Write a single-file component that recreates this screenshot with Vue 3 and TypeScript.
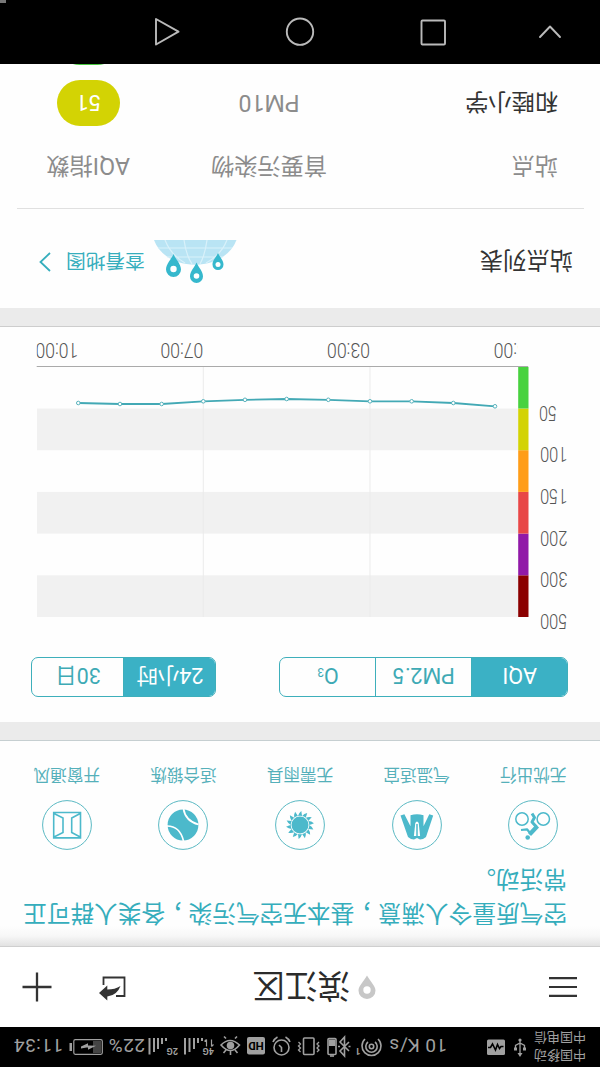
<script setup lang="ts">
interface Tip { label: string; icon: string }
interface Level { value: string; color: string }

const tips: Tip[] = [
  { label: '无忧出行', icon: 'bike' },
  { label: '气温适宜', icon: 'coat' },
  { label: '无需雨具', icon: 'sun' },
  { label: '适合锻炼', icon: 'ball' },
  { label: '开窗通风', icon: 'window' },
]

const pollutants: string[] = ['AQI', 'PM2.5', 'O']
const ranges: string[] = ['24小时', '30日']

const levels: Level[] = [
  { value: '500', color: '#8b0000' },
  { value: '300', color: '#9119a8' },
  { value: '200', color: '#e84747' },
  { value: '150', color: '#ff9d18' },
  { value: '100', color: '#d3d304' },
  { value: '50', color: '#48d23f' },
]
const step = 41.7
const plotTop = 25

const hours = ['23:00', '03:00', '07:00', '10:00']
const hourX = [63.3, 230, 396.7, 521.7]

const values = [235.7, 239, 240.7, 240.7, 242.2, 243, 242.2, 240.7, 238, 238, 239]
const points = values.map((y, i) => ({ x: 105 + i * 41.67, y }))
const line = points.map(p => `${p.x},${p.y}`).join(' ')
const rays = Array.from({ length: 14 }, (_, i) => (i * 360) / 14)
</script>

<template>
  <div class="screen">
    <div class="status">
      <div class="carrier"><span>中国移动</span><span>中国电信</span></div>
      <svg class="usb" width="12" height="20" viewBox="0 0 12 20" fill="none" stroke="currentColor" stroke-width="1.3">
        <path d="M6 3V17M1.5 8v3.5L6 14l4.5-2.5V8" /><circle cx="6" cy="17" r="1.6" fill="currentColor" stroke="none" />
        <path d="M6 0L8.5 4h-5zM0 6.5h3v3H0zM9 6.5h3v3H9z" fill="currentColor" stroke="none" />
      </svg>
      <svg class="pulse" width="18" height="16" viewBox="0 0 18 16"><rect width="18" height="15.5" rx="1.5" fill="currentColor" /><path d="M1.500 8.500H4l1.500-2 2 4 2-5.500 3 6 2-3.500H17" fill="none" stroke="#000" stroke-width="1.6" /></svg>
      <span class="speed">10 K/s</span>
      <svg class="icons" width="236" height="40" viewBox="217 0 236 40" fill="none" stroke="currentColor" stroke-width="1.6">
        <path d="M222 28a9.5 9.5 0 1 1 13 0M225 25a5.7 5.7 0 1 1 7 0" /><circle cx="228.500" cy="20.500" r="2.2" />
        <text x="239.500" y="19" class="tiny">1</text>
        <path d="M251 16l9 9-4.500 5V11l4.500 5-9 9M249.500 20.500h2M260 20.500h2" />
        <rect x="264" y="12.500" width="8" height="16" rx="1" /><path d="M266 11h4" /><rect x="265" y="21" width="6" height="6.500" fill="currentColor" stroke="none" />
        <rect x="286" y="12.500" width="10.500" height="16.500" rx="1" /><path d="M283 15l-2 2 2 2-2 2 2 2-2 2M299.500 15l2 2-2 2 2 2-2 2 2 2" stroke-width="1.3" />
        <circle cx="318.500" cy="19.500" r="7.500" /><path d="M318.500 15v4.500l2.500 2.500M310 25a10 10 0 0 0 4.500 5M327 25a10 10 0 0 1-4.500 5" />
        <rect x="335" y="12.500" width="18" height="17.500" rx="2" fill="currentColor" stroke="none" /><text x="344" y="25.500" class="hd" text-anchor="middle">HD</text>
        <path d="M360.500 22q9-11 18.500 0q-9 9-18.500 0zM369.500 12V16M362.500 14l2.500 3M376.500 14l-2.500 3M365 28.500l-2 2M374 28.500l2 2" /><circle cx="369.500" cy="21.500" r="3" fill="currentColor" />
        <text x="386" y="19" class="tiny">4G</text><path d="M388.500 20.500v7m-2-5l2-2M393.500 27.500v-7m2 5l-2 2" stroke-width="1.2" />
        <path d="M398 29v-3M402 29v-5M406 29V18M410.500 29V15M415 29V12.500" stroke-width="2" />
        <text x="422" y="19" class="tiny">2G</text>
        <path d="M434 29v-3M438 29v-6M442 29V18M446 29V15M450.500 29V12.500" stroke-width="2" />
      </svg>
      <span class="percent">22%</span>
      <svg class="battery" width="34" height="18" viewBox="0 0 34 18"><rect x=".7" y="1.700" width="28.500" height="14.600" rx="1.500" fill="none" stroke="currentColor" stroke-width="1.2" /><rect x="2" y="3" width="8" height="12" fill="#444" /><path d="M31 5h2.500v8H31z" fill="currentColor" /><path d="M7 10.300l8-4v2.200h1.500l5.500-.9v2l-7 3.200v-2.300h-1z" fill="currentColor" /></svg>
      <span class="time">11:34</span>
    </div>

    <header class="header">
      <svg class="menu" width="28" height="22" viewBox="0 0 28 22"><path d="M0 2.200h28M0 11h28M0 19.800h28" stroke="#333" stroke-width="2.200" /></svg>
      <div class="place">
        <svg width="18" height="24" viewBox="0 0 18 24"><path d="M9 23.500C6 18 .5 13 .5 8.500a8.500 8.500 0 0 1 17 0C17.500 13 12 18 9 23.500z" fill="#c7c7c7" /><circle cx="9" cy="9" r="3.700" fill="#fff" /></svg>
        <h1>滨江区</h1>
      </div>
      <div class="actions">
        <svg width="30" height="28" viewBox="0 0 30 28"><g transform="rotate(180 15 14)"><path d="M6.500 12V4.500h21v18.500h-8.500" fill="none" stroke="#333" stroke-width="1.800" /><path d="M2 20L10.300 12.500v4q7.700 0 13.200-3.500Q20 22.500 10.300 23.500V27.500z" fill="#333" /></g></svg>
        <svg width="30" height="30" viewBox="0 0 30 30"><path d="M15 .5v29M.5 15h29" stroke="#333" stroke-width="2.300" /></svg>
      </div>
    </header>

    <section class="advice">
      <p>空气质量令人满意<span class="comma">，</span>基本无空气污染<span class="comma">，</span>各类人群可正<br />常活动。</p>
      <ul class="tips">
        <li v-for="tip in tips" :key="tip.icon">
          <svg width="50" height="50" viewBox="0 0 50 50">
            <circle cx="25" cy="25" r="24.400" fill="none" stroke="#5ab9c3" stroke-width="1" />
            <g transform="rotate(180 25 25)" fill="#4cb9cb">
              <template v-if="tip.icon === 'bike'">
                <g fill="none" stroke="#4cb9cb" stroke-width="1.500"><circle cx="14" cy="19" r="6.200" /><circle cx="35.300" cy="19" r="6.200" /></g>
                <circle cx="19.700" cy="37.500" r="2.300" />
                <g fill="none" stroke="#4cb9cb" stroke-linejoin="round">
                  <path d="M24 13.500l2.500 4-2.500 4.500 4.500 5" stroke-width="3" />
                  <path d="M29.500 26L21.500 34.500" stroke-width="4.200" />
                  <path d="M13 30l6-.7 4 5" stroke-width="2.200" />
                </g>
              </template>
              <template v-else-if="tip.icon === 'coat'">
                <path d="M8.500 15.500l3.900-1.200 6.100 12V15.300q6.500-2 13 0v11l5.800-12 3.900 1.200L34 37q-3 2.500-6 2.500l-3-1.500-3 1.500q-3 0-6-2.500z" />
                <path d="M23.300 23q1.700-3 3.400 0l1.400 13h-6.200z" fill="#fff" /><path d="M25 24v14" stroke="#4cb9cb" stroke-width="1.500" />
              </template>
              <template v-else-if="tip.icon === 'sun'">
                <circle cx="25" cy="25" r="8.500" />
                <path v-for="r in rays" :key="r" d="M23 16q2-.6 4 0q-.3-2.500-.7-5q-2.600 2-3.300 5z" :transform="`rotate(${r} 25 25)`" />
              </template>
              <template v-else-if="tip.icon === 'ball'">
                <circle cx="25" cy="25" r="15.400" />
                <path d="M25.500 9q2 12 15 15.500M9 26q13 0 16.500 15" fill="none" stroke="#fff" stroke-width="1.700" />
              </template>
              <template v-else>
                <path d="M11.700 12.500h26.800v25.400H11.700zM12 13.500l9 4.500v14.500L12 37M38.200 13.500l-8.500 4.500v14.500l8.500 4.500" fill="none" stroke="#4cb9cb" stroke-width="1.600" />
              </template>
            </g>
          </svg>
          <span>{{ tip.label }}</span>
        </li>
      </ul>
    </section>

    <section class="trend">
      <div class="switches">
        <div class="segment wide">
          <span v-for="(p, i) in pollutants" :key="p" :class="{ active: i === 0 }">{{ p }}<small v-if="p === 'O'">3</small></span>
        </div>
        <div class="segment">
          <span v-for="(r, i) in ranges" :key="r" :class="{ active: i === 0 }">{{ r }}</span>
        </div>
      </div>
      <svg class="chart" width="600" height="315" viewBox="0 0 600 315">
        <defs><clipPath id="plot"><rect x="82" y="0" width="481.300" height="315" /></clipPath></defs>
        <g v-for="(l, i) in levels" :key="l.value">
          <rect v-if="i % 2 === 0" x="82" :y="plotTop + i * step" width="481" :height="step" fill="#f1f1f1" />
          <rect x="71.500" :y="plotTop + i * step" width="10.300" :height="step" :fill="l.color" />
          <text :x="l.value === '50' ? 43 : 32.5" :y="28 + i * step" :textLength="l.value === '50' ? 18 : 27.5" lengthAdjust="spacingAndGlyphs">{{ l.value }}</text>
        </g>
        <path d="M230 25V275M396.700 25V275" stroke="#ebebeb" stroke-width="1" />
        <path d="M72 275.500H563.300" stroke="#aaa" stroke-width="1.200" />
        <g clip-path="url(#plot)">
          <text v-for="(h, i) in hours" :key="h" :x="hourX[i]" y="299.300" textLength="43" lengthAdjust="spacingAndGlyphs">{{ h }}</text>
        </g>
        <polyline :points="line" fill="none" stroke="#43a9b5" stroke-width="1.800" />
        <circle v-for="p in points" :key="p.x" :cx="p.x" :cy="p.y" r="1.800" fill="#fff" stroke="#58b3bd" stroke-width="1" />
      </svg>
    </section>

    <section class="stations">
      <div class="heading">
        <h2>站点列表</h2>
        <div class="map-link">
          <svg width="84" height="44" viewBox="0 0 84 44">
            <g transform="rotate(180 42 22)">
              <path d="M1 0C13 33 71 33 83.500 0z" fill="#b9e4f4" />
              <path d="M5 8H79M14 17H70M31 0q2 15 8 24M54 0q-2 15-7 24M12 0q6 15 20 23M74 0q-6 15-21 23" fill="none" stroke="#d9f1fa" stroke-width="1.200" />
              <g fill="#36b8cd"><path d="M20.500 14c2 5 7.500 10 7.500 15.500a7.500 7.500 0 0 1-15 0C13 24 18.500 19 20.500 14zM43.500 22.500c2 5 6.500 8.500 6.500 14a6.500 6.500 0 0 1-13 0c0-5.500 4.500-9 6.500-14zM65 13c2 4.500 5.500 7 5.500 11.500a5.500 5.500 0 0 1-11 0C59.500 20 63 17.500 65 13z" /></g>
              <g fill="#fff"><circle cx="20.500" cy="29" r="3.200" /><circle cx="43.500" cy="36" r="2.800" /><circle cx="65" cy="24.500" r="2.500" /></g>
            </g>
          </svg>
          <span>查看地图</span>
          <svg class="arrow" width="12" height="20" viewBox="0 0 12 20"><path d="M1 1l9.500 9L1 19" fill="none" stroke="#36aebd" stroke-width="1.800" /></svg>
        </div>
      </div>
      <div class="row head"><span class="name">站点</span><span class="main">首要污染物</span><span class="index">AQI指数</span></div>
      <div class="row"><span class="name dark">和睦小学</span><span class="main">PM10</span><span class="index"><b class="pill">51</b></span></div>
      <div class="row peek"><b class="pill green"></b></div>
    </section>

    <nav class="nav">
      <svg width="600" height="64" viewBox="0 0 600 64" fill="none" stroke="#bababa" stroke-width="1.900" stroke-linejoin="round" stroke-linecap="round">
        <path d="M40 27l10 10.500L60 27" /><rect x="155" y="19.500" width="23.500" height="24" rx="1" /><circle cx="300" cy="32.300" r="13.200" /><path d="M444 19.500v25.500L421.500 32.300z" />
        <path d="M594 63h6" stroke="#777" stroke-width="4" stroke-linecap="butt" />
      </svg>
    </nav>
  </div>
</template>

<style scoped>
.screen {
  width: 600px;
  height: 1067px;
  display: flex;
  flex-direction: column;
  overflow: hidden;
  transform: rotate(180deg);
  background: #fefefe;
  font-family: Roboto, "Noto Sans CJK SC", sans-serif;
}
.status {
  height: 40px;
  flex: none;
  display: flex;
  align-items: center;
  background: #000;
  color: #a0a0a0;
  box-sizing: border-box;
  padding-left: 14px;
  font-size: 19px;
  white-space: nowrap;
}
.status > * { flex: none; }
.carrier {
  width: 60px;
  display: flex;
  flex-direction: column;
  font-size: 13px;
  line-height: 17.500px;
  padding-top: 1px;
}
.pulse { margin-left: 9px; }
.speed { width: 64px; margin-left: 40px; letter-spacing: 0.4px; }
.percent { width: 42px; margin-left: 2px; letter-spacing: 0.4px; }
.battery { width: 34px; }
.time { margin-left: 6px; letter-spacing: 0.4px; }
.speed, .percent, .time { line-height: 40px; padding-top: 2px; height: 40px; box-sizing: border-box; }
.tiny { font-size: 9px; font-weight: 700; fill: #a0a0a0; stroke: none; }
.hd { font-size: 11.500px; font-weight: 700; fill: #000; stroke: none; }

.header {
  height: 80px;
  flex: none;
  display: flex;
  align-items: center;
  box-sizing: border-box;
  padding: 0 22px 0 23px;
  background: #fff;
}
.place { display: flex; align-items: center; gap: 8px; margin-left: 173px; }
h1 { margin: 0; font-size: 32.500px; font-weight: 400; line-height: 38px; padding-top: 3px; color: #2b2b2b; }
.actions { display: flex; align-items: center; gap: 45px; margin-left: auto; }

.advice {
  height: 207px;
  flex: none;
  box-sizing: border-box;
  padding-top: 15.500px;
  border-top: 1px solid #cfcfcf;
  border-bottom: 1px solid #c6cfd1;
  background: linear-gradient(#e2e2e2, #f7f7f7 10px, #fefefe 20px);
}
.advice p {
  margin: 0 0 0 33px;
  font-size: 23.650px;
  line-height: 34px;
  color: #35adbc;
  white-space: nowrap;
}
.comma { display: inline-block; width: 1em; text-indent: 5px; font-feature-settings: "halt"; }
.tips { list-style: none; display: flex; margin: 12.500px 8.500px 0 8.500px; padding: 0; }
.tips li { flex: 1; display: flex; flex-direction: column; align-items: center; }
.tips span { margin-top: 14px; font-size: 16.600px; line-height: 24px; color: #55b0ba; }

.trend {
  height: 414px;
  flex: none;
  box-sizing: border-box;
  border-top: 18px solid #ebebeb;
  border-bottom: 1px solid #cdcdcd;
}
.switches { display: flex; justify-content: space-between; padding: 25px 31.500px 0 32px; }
.segment {
  width: 185px;
  height: 40px;
  display: flex;
  box-sizing: border-box;
  border: 1px solid #3eafbb;
  border-radius: 7px;
  overflow: hidden;
  color: #3eaab5;
  font-size: 21.500px;
  line-height: 41px;
  text-align: center;
}
.segment.wide { width: 288.500px; }
.segment span { flex: 1; border-left: 1px solid #3eafbb; }
.segment span:first-child { border-left: 0; }
.segment .active { background: #3bb1c5; color: #fff; }
.segment small { font-size: 12px; }
.chart { display: block; margin-top: 15px; }
.chart text { font-size: 21px; font-weight: 300; fill: #555; }

.stations {
  height: 262px;
  flex: none;
  box-sizing: border-box;
  border-top: 18px solid #ebebeb;
  overflow: hidden;
}
.heading {
  height: 100px;
  margin: 0 17px 0 16px;
  box-sizing: border-box;
  padding-left: 11px;
  border-bottom: 1px solid #e0e0e0;
  display: flex;
  justify-content: space-between;
}
h2 { margin: 0; font-size: 23.300px; font-weight: 400; line-height: 96px; color: #333; }
.map-link { display: flex; align-items: flex-start; padding: 24px 22px 0 0; color: #36aebd; }
.map-link span { margin: 9.500px 0 0 8px; font-size: 19.700px; line-height: 28px; }
.arrow { margin: 12px 0 0 15px; }
.row {
  height: 58px;
  box-sizing: border-box;
  display: grid;
  grid-template-columns: 181px 300px 119px;
  align-items: center;
  font-size: 23.200px;
  color: #8c8c8c;
}
.row.head { height: 76px; padding-top: 4px; }
.name { padding-left: 42px; }
.dark { color: #333; padding-bottom: 3px; }
.main { text-align: center; }
.index { margin-left: -11px; }
.pill {
  display: block;
  width: 63.500px;
  height: 45.500px;
  margin-left: 9.500px;
  border-radius: 23px;
  background: #d3d304;
  color: #fff;
  font-weight: 400;
  font-size: 22.500px;
  line-height: 46px;
  text-align: center;
}
.row.peek { align-items: start; padding-top: 8.500px; }
.peek .pill { grid-column: 3; margin-left: -1.500px; background: #48c83f; }
.nav { height: 64px; flex: none; background: #000; }
.nav svg { display: block; }
</style>

<style>
body { margin: 0; background: #fefefe; overflow: hidden; }
</style>
